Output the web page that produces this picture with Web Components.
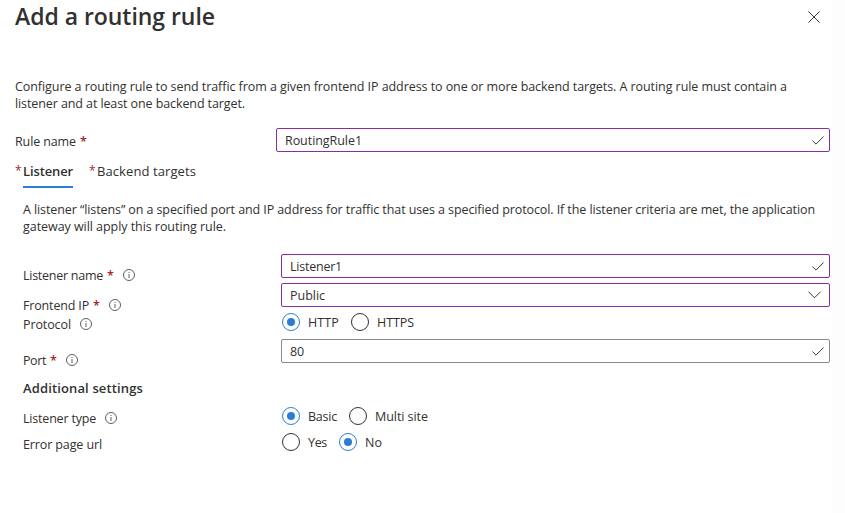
<!DOCTYPE html>
<html lang="en">
<head>
<meta charset="utf-8">
<title>Add a routing rule</title>
<style>
html,body{margin:0;height:100%;overflow:hidden}
body{background:linear-gradient(90deg,#fff 831px,#fdfdfd 831px);font:12.5px/17px "Open Sans","Noto Sans",sans-serif;color:#323130}
</style>
</head>
<body>
<routing-panel></routing-panel>
<script>
const define=(name,html,init)=>customElements.define(name,class extends HTMLElement{
  connectedCallback(){
    if(this.shadowRoot)return;
    const t=document.createElement('template');
    t.innerHTML=typeof html==='function'?html(this):html;
    this.attachShadow({mode:'open'}).append(t.content.cloneNode(true));
    if(init)init(this,this.shadowRoot);
  }
});

/* One line of text whose tracking is set so that it takes the width w. */
define('fit-text',`<style>:host{display:inline-block;white-space:nowrap;flex:none}span{display:inline-block}</style><span><slot></slot></span>`,
(el,root)=>{
  const w=+el.getAttribute('w'),s=root.querySelector('span');
  el.style.width=w+'px';
  s.style.letterSpacing=(w-s.getBoundingClientRect().width)/el.textContent.length+'px';
});

define('req-star',`<style>:host{display:inline-block;width:6px;margin-left:4px;color:#a4262c;font-weight:600;flex:none}</style>*`);

define('info-icon',`<style>:host{display:block;width:12px;height:12px;margin-left:9px;margin-bottom:1px;flex:none}svg{display:block}</style>
<svg width="12" height="12" viewBox="0 0 12 12" fill="none" stroke="#605e5c"><circle cx="6" cy="6" r="5.5"/><path d="M6 5v4M6 3v1"/></svg>`);

const glyphs={check:[12,9,'M.4 4.6 4 8.1 11.6.5'],chevron:[13,8,'M.4.6 6.5 6.8 12.6.6'],close:[12,12,'M.4.4 11.6 11.6M11.6.4.4 11.6']};
define('glyph-icon',el=>{
  const [w,h,d]=glyphs[el.getAttribute('name')];
  return `<style>:host{display:block;flex:none}svg{display:block}</style>
<svg width="${w}" height="${h}" fill="none" stroke="#3b3a39" stroke-width="1"><path d="${d}"/></svg>`;
});

define('field-box',el=>`<style>
:host{display:flex;box-sizing:border-box;height:24px;border:1px solid #8a2da5;border-radius:2px;padding:0 5px 0 8px;align-items:center;justify-content:space-between;background:#fff}
:host([plain]){border-color:#8a8886}
:host([select]){padding-right:8px}
</style><slot></slot><glyph-icon name="${el.hasAttribute('select')?'chevron':'check'}"></glyph-icon>`);

define('radio-option',`<style>
:host{display:flex;align-items:center;gap:8px;height:18px;flex:none}
i{box-sizing:border-box;width:18px;height:18px;border:1px solid #323130;border-radius:50%;display:grid;place-items:center;flex:none}
:host([checked]) i{border-color:#2b7cd3}
:host([checked]) i::after{content:"";width:8px;height:8px;border-radius:50%;background:#2b7cd3}
</style><i></i><slot></slot>`);

/* A form row: --lt is the space above its label. */
define('form-row',`<style>
:host{display:grid;grid-template-columns:var(--label,258px) 1fr;align-items:start}
.l{display:flex;align-items:center;height:17px;padding-top:var(--lt,0px)}
.c{min-width:0}
::slotted(req-star){margin-right:1px}
</style><div class="l"><slot name="label"></slot></div><div class="c"><slot></slot></div>`);

define('radio-set',`<style>:host{display:flex;padding-left:1px}</style><slot></slot>`);

define('tab-item',`<style>
:host{display:flex;height:25px;font-size:13px}
b{font-weight:400;color:#a4262c;width:8px;font-size:12px;margin-top:-1px}
div{box-sizing:border-box;height:25px}
:host([active]){font-weight:600}
:host([active]) div{border-bottom:2px solid #2b7cd3}
</style><b>*</b><div><slot></slot></div>`);

define('routing-panel',`<style>
:host{display:block;padding:0 15px;height:513px;box-sizing:border-box}
header{display:flex;justify-content:space-between;height:78px}
h1{margin:0;font-size:23px;line-height:32px;font-weight:600}
header glyph-icon{margin:11px 10px 0 0}
p{margin:0;display:flex;flex-direction:column}
.tabs{display:flex;gap:16px;height:26px}
section{padding-left:8px;padding-top:12px}
h2{margin:0;font-size:13px;line-height:17px;height:27px;font-weight:600}
</style>
<header><h1><fit-text w="200">Add a routing rule</fit-text></h1><glyph-icon name="close"></glyph-icon></header>
<p><fit-text w="772">Configure a routing rule to send traffic from a given frontend IP address to one or more backend targets. A routing rule must contain a</fit-text><fit-text w="230">listener and at least one backend target.</fit-text></p>
<form-row style="--label:261px;--lt:5px;height:35px;padding-top:16px"><span slot="label"><fit-text w="61">Rule name</fit-text><req-star></req-star></span><field-box><fit-text w="77">RoutingRule1</fit-text></field-box></form-row>
<nav class="tabs"><tab-item active><fit-text w="50">Listener</fit-text></tab-item><tab-item><fit-text w="99">Backend targets</fit-text></tab-item></nav>
<section>
<p style="height:53px"><fit-text w="792">A listener “listens” on a specified port and IP address for traffic that uses a specified protocol. If the listener criteria are met, the application</fit-text><fit-text w="203">gateway will apply this routing rule.</fit-text></p>
<form-row style="--lt:13px;height:29px"><fit-text slot="label" w="80">Listener name</fit-text><req-star slot="label"></req-star><info-icon slot="label"></info-icon><field-box><fit-text w="52">Listener1</fit-text></field-box></form-row>
<form-row style="--lt:14px;height:30px"><fit-text slot="label" w="66">Frontend IP</fit-text><req-star slot="label"></req-star><info-icon slot="label"></info-icon><field-box select><fit-text w="35">Public</fit-text></field-box></form-row>
<form-row style="--lt:3px;height:26px"><fit-text slot="label" w="48">Protocol</fit-text><info-icon slot="label"></info-icon><radio-set><radio-option checked><fit-text w="31">HTTP</fit-text></radio-option><radio-option style="margin-left:12px"><fit-text w="37">HTTPS</fit-text></radio-option></radio-set></form-row>
<form-row style="--lt:13px;height:41px"><fit-text slot="label" w="23">Port</fit-text><req-star slot="label"></req-star><info-icon slot="label"></info-icon><field-box plain><fit-text w="14">80</fit-text></field-box></form-row>
<h2><fit-text w="120">Additional settings</fit-text></h2>
<form-row style="--lt:3px;height:26px"><fit-text slot="label" w="73">Listener type</fit-text><info-icon slot="label"></info-icon><radio-set><radio-option checked><fit-text w="29">Basic</fit-text></radio-option><radio-option style="margin-left:12px"><fit-text w="53">Multi site</fit-text></radio-option></radio-set></form-row>
<form-row style="--lt:3px;height:26px"><fit-text slot="label" w="79">Error page url</fit-text><radio-set><radio-option><fit-text w="19">Yes</fit-text></radio-option><radio-option checked style="margin-left:12px"><fit-text w="17">No</fit-text></radio-option></radio-set></form-row>
</section>`);
</script>
</body>
</html>
